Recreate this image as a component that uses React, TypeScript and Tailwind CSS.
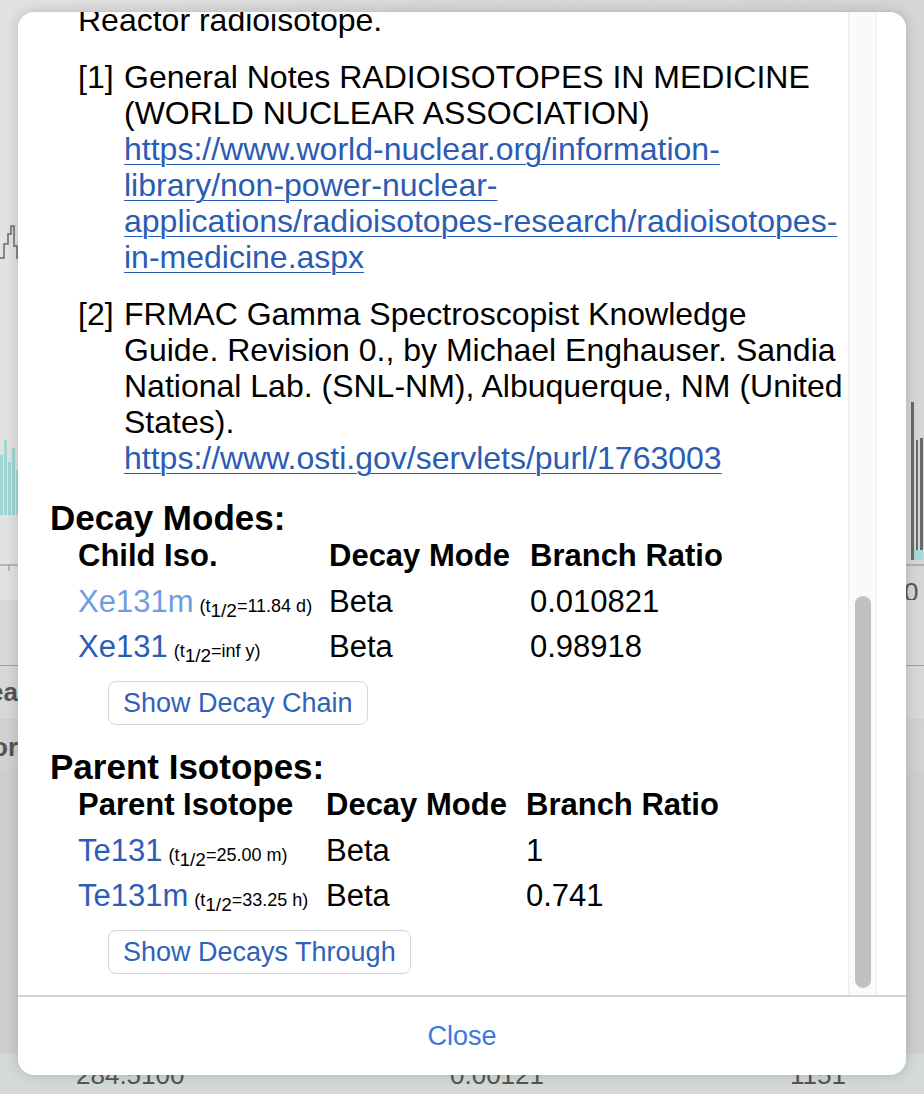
import React from 'react';

type Row = { iso: string; half: string; mode: string; ratio: string; light?: boolean };

const decayRows: Row[] = [
  { iso: 'Xe131m', half: '11.84 d', mode: 'Beta', ratio: '0.010821', light: true },
  { iso: 'Xe131', half: 'inf y', mode: 'Beta', ratio: '0.98918' },
];

const parentRows: Row[] = [
  { iso: 'Te131', half: '25.00 m', mode: 'Beta', ratio: '1' },
  { iso: 'Te131m', half: '33.25 h', mode: 'Beta', ratio: '0.741' },
];

function HalfLife({ value }: { value: string }) {
  return (
    <span className="ml-[6px] whitespace-nowrap text-[18px] text-black">
      (t<sub className="text-[19px]">1/2</sub>={value})
    </span>
  );
}

function IsoTable({ first, rows, cols }: { first: string; rows: Row[]; cols: string }) {
  return (
    <div className="pl-[28px]">
      <div className={`-mt-[3px] grid ${cols} h-[32px] items-center text-[31px] font-bold text-black`}>
        <span>{first}</span>
        <span>Decay Mode</span>
        <span>Branch Ratio</span>
      </div>
      <div className="mt-[14px]">
        {rows.map(r => (
          <div key={r.iso} className={`grid ${cols} h-[45px] items-center text-[31px] text-black`}>
            <span className="whitespace-nowrap">
              <a className={r.light ? 'text-[#6e9de2]' : 'text-[#2c5db6]'}>{r.iso}</a>
              <HalfLife value={r.half} />
            </span>
            <span>{r.mode}</span>
            <span>{r.ratio}</span>
          </div>
        ))}
      </div>
    </div>
  );
}

function OutlineButton({ label, className }: { label: string; className: string }) {
  return (
    <button
      className={`ml-[58px] flex h-[44px] items-center rounded-[8px] border border-[#d6d6d6] bg-white px-[14px] text-[27px] text-[#2f62b8] ${className}`}
    >
      {label}
    </button>
  );
}

function Spectrum() {
  return (
    <svg width="924" height="600" viewBox="0 0 924 600" className="block">
      {/* left edge of the spectrum */}
      <path d="M0 258 H4 V244 H8 V234 H11 V226 H14 V246 H17 V258 H24" fill="none" stroke="#6a6a6a" strokeWidth="1.5" />
      <g fill="#9fd6d6">
        <rect x="0" y="455" width="3" height="60" />
        <rect x="4" y="440" width="3" height="75" />
        <rect x="8" y="462" width="3" height="53" />
        <rect x="12" y="448" width="3" height="67" />
        <rect x="16" y="470" width="3" height="45" />
      </g>
      {/* right edge peaks */}
      <rect x="911" y="402" width="3" height="158" fill="#6a6a6a" />
      <rect x="916" y="440" width="2" height="120" fill="#6a6a6a" />
      <rect x="920" y="438" width="3" height="122" fill="#6a6a6a" />
      <rect x="914" y="550" width="9" height="10" fill="#a5d8d8" />
      {/* axis */}
      <line x1="0" y1="565" x2="924" y2="565" stroke="#8c8c8c" strokeWidth="1" />
      <line x1="9" y1="565" x2="9" y2="571" stroke="#8c8c8c" strokeWidth="1" />
      <text x="904" y="601" fontSize="26" fill="#555" fontFamily="Liberation Sans, Arial, sans-serif">0</text>
    </svg>
  );
}

function Backdrop() {
  return (
    <div className="flex h-full flex-col bg-[#d8d8d8]">
      <div className="h-[600px] bg-gradient-to-r from-[#e2e2e2] via-[#d8d8d8] to-[#d6d6d6]">
        <Spectrum />
      </div>
      <div className="h-[66px] border-b border-[#a0a0a0]" />
      <div className="flex h-[58px] items-center border-b-[5px] border-[#d0d0d0] text-[26px] font-bold text-[#555]">
        <div className="flex w-[18px] justify-end overflow-hidden">
          <span>Sea</span>
        </div>
      </div>
      <div className="flex h-[46px] items-center bg-[#d2d2d2] text-[26px] font-bold text-[#555]">
        <div className="flex w-[18px] justify-end overflow-hidden">
          <span>or</span>
        </div>
      </div>
      <div className="flex-1 bg-[#cfcfcf]" />
      <div className="flex h-[40px] items-start bg-[#d3dad8] pt-[2px] text-[26px] text-[#555]">
        <span className="ml-[76px] w-[374px]">284.5100</span>
        <span className="w-[340px]">0.00121</span>
        <span>1151</span>
      </div>
    </div>
  );
}

export default function App() {
  const cols1 = 'grid-cols-[251px_201px_1fr]';
  const cols2 = 'grid-cols-[248px_200px_1fr]';

  return (
    <div className="relative h-[1094px] w-[924px] overflow-hidden font-['Liberation_Sans',Arial,sans-serif]">
      <Backdrop />

      {/* Modal */}
      <div className="absolute left-[18px] top-[12px] flex h-[1063px] w-[888px] flex-col overflow-hidden rounded-[16px] bg-white shadow-[0_0_14px_rgba(0,0,0,0.18)]">
        <div className="flex h-[983px] shrink-0">
          <div className="min-w-0 flex-1 overflow-hidden pl-[32px]">
            <div className="-mt-[10px] text-[32px] leading-[36px] text-black">
              <p className="pl-[28px]">Reactor radioisotope.</p>

              <div className="mt-[21px] flex pl-[28px]">
                <span className="w-[46px] shrink-0">[1]</span>
                <div className="whitespace-nowrap">
                  General Notes RADIOISOTOPES IN MEDICINE
                  <br />
                  (WORLD NUCLEAR ASSOCIATION)
                  <br />
                  <a className="text-[#2a5cb4] underline decoration-1 underline-offset-[4px]">
                    https://www.world-nuclear.org/information-
                    <br />
                    library/non-power-nuclear-
                    <br />
                    applications/radioisotopes-research/radioisotopes-
                    <br />
                    in-medicine.aspx
                  </a>
                </div>
              </div>

              <div className="mt-[21px] flex pl-[28px]">
                <span className="w-[46px] shrink-0">[2]</span>
                <div className="whitespace-nowrap">
                  FRMAC Gamma Spectroscopist Knowledge
                  <br />
                  Guide. Revision 0., by Michael Enghauser. Sandia
                  <br />
                  National Lab. (SNL-NM), Albuquerque, NM (United
                  <br />
                  States).
                  <br />
                  <a className="text-[#2a5cb4] underline decoration-1 underline-offset-[4px]">
                    https://www.osti.gov/servlets/purl/1763003
                  </a>
                </div>
              </div>
            </div>

            {/* Decay modes */}
            <h3 className="mt-[24px] h-[36px] text-[35px] font-bold leading-[36px] text-black">Decay Modes:</h3>
            <IsoTable first="Child Iso." rows={decayRows} cols={cols1} />
            <OutlineButton label="Show Decay Chain" className="mt-[12px]" />

            {/* Parent isotopes */}
            <h3 className="mt-[24px] h-[36px] text-[35px] font-bold leading-[36px] text-black">Parent Isotopes:</h3>
            <IsoTable first="Parent Isotope" rows={parentRows} cols={cols2} />
            <OutlineButton label="Show Decays Through" className="mt-[12px]" />
          </div>

          {/* Scrollbar */}
          <div className="flex w-[29px] shrink-0 flex-col items-center justify-end border-x border-[#ececec] bg-[#fafafa] pb-[7px]">
            <div className="h-[392px] w-[16px] rounded-full bg-[#c1c1c1]" />
          </div>
          <div className="w-[29px] shrink-0" />
        </div>

        <div className="flex flex-1 items-center justify-center border-t-2 border-[#d4d4d4]">
          <button className="text-[27px] text-[#3b79df]">Close</button>
        </div>
      </div>
    </div>
  );
}
